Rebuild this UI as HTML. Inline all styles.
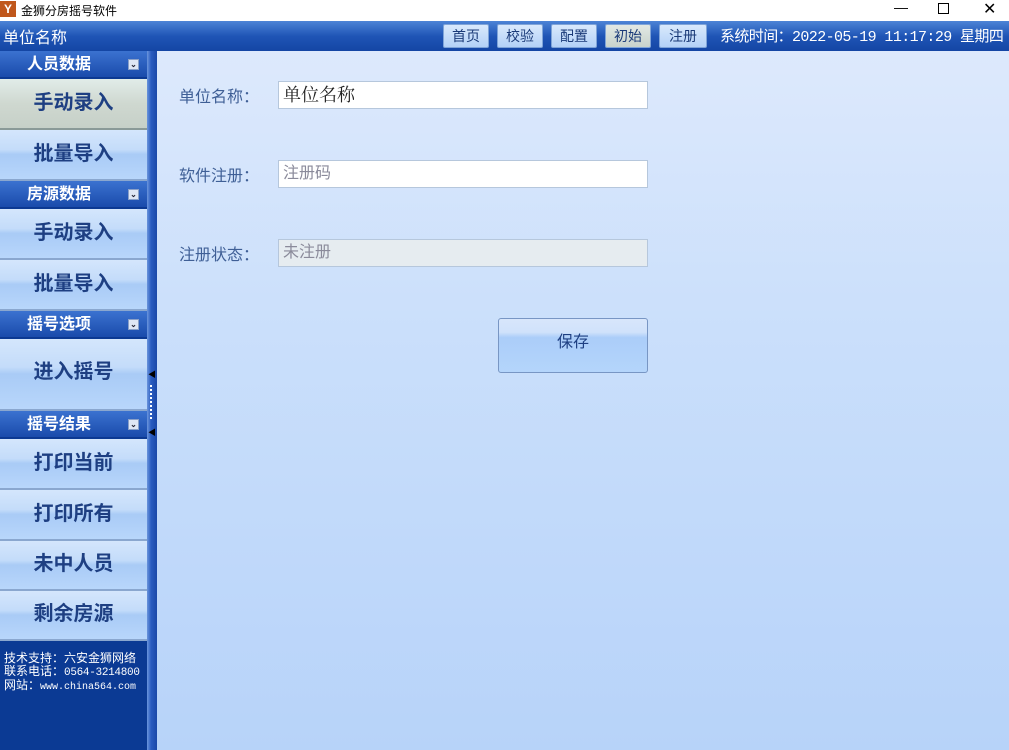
<!DOCTYPE html>
<html><head><meta charset="utf-8"><style>
*{margin:0;padding:0;box-sizing:border-box}
body{width:1009px;height:750px;overflow:hidden;font-family:"Liberation Sans","Noto Sans CJK SC","WenQuanYi Zen Hei",sans-serif;background:#fff;position:relative}
.title{position:absolute;left:0;top:0;width:1009px;height:21px;background:#fff;font-size:12px}
.logo{position:absolute;left:0;top:1px;width:16px;height:16px;background:#c0571c;color:#fff;font-size:12px;font-weight:bold;text-align:center;line-height:16px}
.hdr{position:absolute;left:0;top:21px;width:1009px;height:30px;background:linear-gradient(#4d84d6,#1f55b6 50%,#1446a4)}
.btn{position:absolute;top:3px;height:24px;border:1px solid #7fa4d8;border-radius:2px;background:linear-gradient(#d9e9fc,#b3d1f7);font-size:14px;color:#1a3a78;text-align:center;line-height:22px}
.side{position:absolute;left:0;top:51px;width:147px;height:699px;background:#0b3a94}
.split{position:absolute;left:147px;top:51px;width:10px;height:699px;background:linear-gradient(90deg,#6b95dd,#2a5cc0 40%,#1a48a8)}
.gh{position:absolute;left:0;width:147px;height:27px;background:linear-gradient(#3b72d0,#1a4bab);color:#fff;font-size:16px;font-weight:bold;line-height:27px;padding-left:27px;border-bottom:1px solid #0d3890}
.gh i{position:absolute;right:8px;top:8px;width:11px;height:11px;background:#dfe6f4;border:1px solid #8aa0c8;font-size:8px;color:#223;line-height:9px;text-align:center;font-style:normal}
.it{position:absolute;left:0;width:147px;border-bottom:2px solid #8aa7cf;background:linear-gradient(#d4e6fc,#c4dcfa 40%,#a9cbf6 50%,#b8d6fb);color:#1e3f82;font-size:20px;font-weight:bold;text-align:center}
.sel{background:linear-gradient(#e1ece9,#cfd8d0 50%,#c6d0c8);border-bottom:2px solid #8a9a98}
.foot{position:absolute;left:4px;top:653px;color:#fff;font-size:12px;line-height:13px;font-family:"Liberation Mono","Noto Sans CJK SC",monospace;white-space:nowrap}
.main{position:absolute;left:157px;top:51px;width:852px;height:699px;background:linear-gradient(#dde9fc,#cadffb 40%,#b7d3f9)}
.lab{position:absolute;left:179px;font-size:16px;color:#3f5f96}
.inp{position:absolute;left:278px;width:370px;height:28px;background:#fff;border:1px solid #b6c7dc;font-size:16px;padding-left:4px;line-height:26px}
</style></head><body>
<div class="title"><div class="logo">Y</div><span style="position:absolute;left:21px;top:2px">金狮分房摇号软件</span>
<span style="position:absolute;left:894px;top:-1px;font-size:14px">—</span>
<span style="position:absolute;left:938px;top:3px;width:11px;height:11px;border:1px solid #000"></span>
<span style="position:absolute;left:983px;top:-1px;font-size:16px">✕</span></div>
<div class="hdr"><span style="position:absolute;left:3px;top:3px;color:#fff;font-size:16px">单位名称</span>
<div class="btn" style="left:443px;width:46px">首页</div>
<div class="btn" style="left:497px;width:46px">校验</div>
<div class="btn" style="left:551px;width:46px">配置</div>
<div class="btn" style="left:605px;width:46px;background:linear-gradient(#e2e8e4,#c8d3cc)">初始</div>
<div class="btn" style="left:659px;width:48px">注册</div>
<span style="position:absolute;left:720px;top:4px;color:#fff;font-size:15px;white-space:nowrap;font-family:'Liberation Mono','Noto Sans CJK SC',monospace;letter-spacing:-0.6px">系统时间：2022-05-19 11:17:29 星期四</span></div>
<div class="side">
<div class="gh" style="top:0">人员数据<i>⌄</i></div>
<div class="it sel" style="top:28px;height:51px;line-height:48px">手动录入</div>
<div class="it" style="top:79px;height:51px;line-height:48px">批量导入</div>
<div class="gh" style="top:130px">房源数据<i>⌄</i></div>
<div class="it" style="top:158px;height:51px;line-height:48px">手动录入</div>
<div class="it" style="top:209px;height:51px;line-height:48px">批量导入</div>
<div class="gh" style="top:260px">摇号选项<i>⌄</i></div>
<div class="it" style="top:288px;height:72px;line-height:66px">进入摇号</div>
<div class="gh" style="top:360px">摇号结果<i>⌄</i></div>
<div class="it" style="top:388px;height:51px;line-height:48px">打印当前</div>
<div class="it" style="top:439px;height:51px;line-height:48px">打印所有</div>
<div class="it" style="top:490px;height:50px;line-height:46px">未中人员</div>
<div class="it" style="top:540px;height:50px;line-height:46px">剩余房源</div>
</div>
<div class="foot">技术支持：六安金狮网络<br>联系电话：<span style="font-size:11px;letter-spacing:-0.3px">0564-3214800</span><br>网站：<span style="font-size:10px">www.china564.com</span></div>
<div class="split"><span style="position:absolute;left:1px;top:318px;font-size:8px;color:#000">◀</span><span style="position:absolute;left:3px;top:334px;width:2px;height:34px;border-left:2px dotted #fff"></span><span style="position:absolute;left:1px;top:376px;font-size:8px;color:#000">◀</span></div>
<div class="main"></div>
<div class="lab" style="top:83px">单位名称：</div>
<div class="inp" style="top:81px;color:#222;font-family:'Liberation Serif','Noto Serif CJK SC',serif;font-size:18px">单位名称</div>
<div class="lab" style="top:162px">软件注册：</div>
<div class="inp" style="top:160px;color:#8a8a9a">注册码</div>
<div class="lab" style="top:241px">注册状态：</div>
<div class="inp" style="top:239px;background:#e6ecf0;color:#8a8a9a">未注册</div>
<div style="position:absolute;left:498px;top:318px;width:150px;height:55px;border:1px solid #7896c4;border-radius:3px;background:linear-gradient(#d8e6fb,#d0e2fb 25%,#abcdf9 35%,#b4d5fb);color:#1e3f82;font-size:16px;text-align:center;line-height:48px">保存</div>
</body></html>
